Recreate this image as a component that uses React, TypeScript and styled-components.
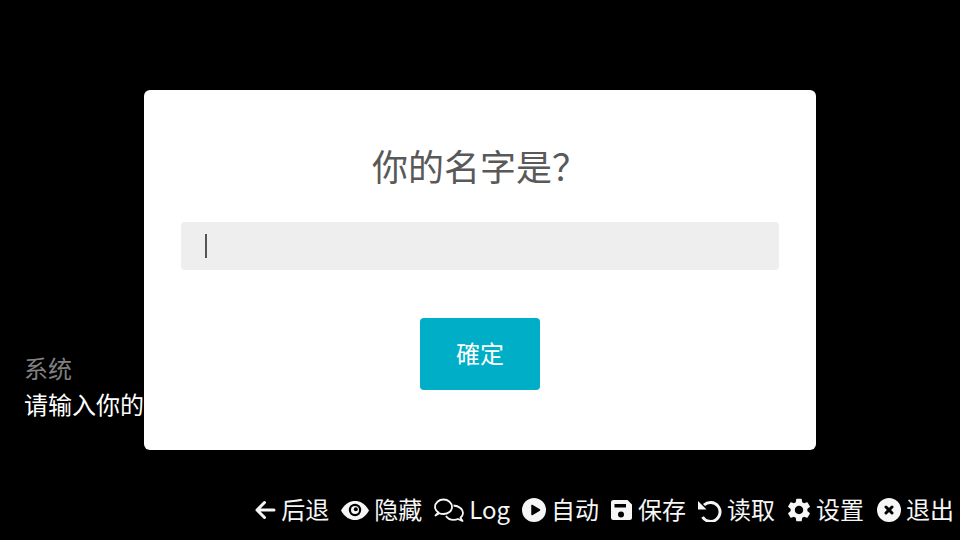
import * as React from "react";
import styled, { createGlobalStyle } from "styled-components";
import { MdSettings } from "react-icons/md";

const fontStack = `"Noto Sans CJK SC", "Noto Sans", sans-serif`;

const GlobalStyle = createGlobalStyle`
  html, body {
    margin: 0;
    padding: 0;
    background: #000;
    overflow: hidden;
  }
  * {
    box-sizing: border-box;
  }
`;

const Page = styled.div`
  width: 960px;
  height: 540px;
  display: flex;
  flex-direction: column;
  background: #000;
  font-family: ${fontStack};
  font-size: 24px;
  color: #fff;
`;

const Dialogue = styled.div`
  flex: 1;
  padding: 350px 24px 0;
  line-height: 36px;
`;

const Speaker = styled.div`
  color: #808080;
`;

const Toolbar = styled.div`
  height: 60px;
  display: flex;
  align-items: center;
  justify-content: flex-end;
  gap: 12px;
  padding-right: 6px;
`;

const ToolButton = styled.div`
  display: flex;
  align-items: center;
  gap: 5px;
  color: #f6f6f6;
`;

const ToolLabel = styled.span`
  line-height: 36px;
  padding-bottom: 2px;
`;

const ToolIcon = styled.svg<{ $w: number }>`
  display: block;
  flex: none;
  width: ${p => p.$w}px;
  height: 24px;
  fill: currentColor;
`;

const GearIcon = styled(MdSettings)`
  display: block;
  flex: none;
  width: 28px;
  height: 28px;
  margin: 0 -2px;
`;

const Overlay = styled.div`
  position: fixed;
  inset: 0;
  display: flex;
  align-items: center;
  justify-content: center;
`;

const Modal = styled.div`
  width: 672px;
  height: 360px;
  padding: 48px 37px 0;
  display: flex;
  flex-direction: column;
  align-items: center;
  background: #fff;
  border-radius: 6px;
`;

const Title = styled.h2`
  margin: 0 0 30px;
  font-size: 36px;
  font-weight: 400;
  line-height: 54px;
  color: #595959;
`;

const NameInput = styled.div`
  width: 100%;
  height: 48px;
  padding: 12px 24px;
  background: #eee;
  border-radius: 4px;
  margin-bottom: 48px;
`;

const Caret = styled.div`
  width: 2px;
  height: 24px;
  background: #555;
`;

const ConfirmButton = styled.button`
  width: 120px;
  height: 72px;
  padding: 0 0 4px;
  border: 0;
  border-radius: 4px;
  background: #00aec7;
  color: #fff;
  font-family: ${fontStack};
  font-size: 24px;
`;

const tools = [
  {
    label: "后退",
    icon: (
      <ToolIcon $w={22} viewBox="0 0 22 24">
        <path d="M20 12H3M10.500 4.500L3 12l7.500 7.500" fill="none" stroke="currentColor" strokeWidth="3" strokeLinecap="round" strokeLinejoin="round" />
      </ToolIcon>
    )
  },
  {
    label: "隐藏",
    icon: (
      <ToolIcon $w={28} viewBox="0 0 28 24">
        <path d="M0 12.500C4 5.500 9 3 14 3s10 2.500 14 9.500c-4 7-9 9.500-14 9.500S4 19.500 0 12.500z" />
        <circle cx="14" cy="12" r="6.200" fill="#000" />
        <circle cx="14" cy="12" r="4" />
        <circle cx="14.800" cy="11.300" r="2" fill="#000" />
      </ToolIcon>
    )
  },
  {
    label: "Log",
    icon: (
      <ToolIcon $w={30} viewBox="0 0 30 24">
        <path
          d="M4.500 14.500C2.300 13 1 11.200 1 9c0-4 3.800-7.500 8.500-7.500S18 5 18 9s-3.800 7-8.500 7c-1.500 0-3-.2-4.300-.8L1.500 17.500z"
          fill="none"
          stroke="currentColor"
          strokeWidth="1.800"
          strokeLinejoin="round"
        />
        <path
          d="M19.500 7.500C25 8 29 11 29 15c0 1.900-1 3.500-2.500 4.800l2 3.200-4.500-2c-1.400.6-3 .8-4.500.8-3.500 0-6-1.300-7.500-3.800"
          fill="none"
          stroke="currentColor"
          strokeWidth="1.800"
          strokeLinejoin="round"
        />
      </ToolIcon>
    )
  },
  {
    label: "自动",
    icon: (
      <ToolIcon $w={24} viewBox="0 0 24 24">
        <circle cx="12" cy="12" r="12" />
        <path d="M10 7.500v9l7.500-4.500z" fill="#000" stroke="#000" strokeWidth="1.500" strokeLinejoin="round" />
      </ToolIcon>
    )
  },
  {
    label: "保存",
    icon: (
      <ToolIcon $w={22} viewBox="0 0 22 24">
        <path d="M2.500 2h14L21 6.500v13a2.500 2.500 0 0 1-2.500 2.500h-16A2.500 2.500 0 0 1 0 19.500v-15A2.500 2.500 0 0 1 2.500 2z" />
        <rect x="3.500" y="6" width="11.500" height="3.500" fill="#000" />
        <circle cx="10" cy="16.500" r="3" fill="#000" />
      </ToolIcon>
    )
  },
  {
    label: "读取",
    icon: (
      <ToolIcon $w={24} viewBox="0 0 24 24">
        <path d="M6 7A9.500 9.500 0 1 1 4.500 19" fill="none" stroke="currentColor" strokeWidth="3" />
        <path d="M0 3v8.500h8.500z" />
      </ToolIcon>
    )
  },
  { label: "设置", icon: <GearIcon /> },
  {
    label: "退出",
    icon: (
      <ToolIcon $w={25} viewBox="0 0 25 24">
        <circle cx="13" cy="12" r="12" />
        <path d="M10 9l6 6M16 9l-6 6" stroke="#000" strokeWidth="3" strokeLinecap="round" />
      </ToolIcon>
    )
  }
];

export default function App() {
  return (
    <Page>
      <GlobalStyle />
      <Dialogue>
        <Speaker>系统</Speaker>
        <div>请输入你的名字</div>
      </Dialogue>
      <Toolbar>
        {tools.map(tool => (
          <ToolButton key={tool.label}>
            {tool.icon}
            <ToolLabel>{tool.label}</ToolLabel>
          </ToolButton>
        ))}
      </Toolbar>
      <Overlay>
        <Modal>
          <Title>你的名字是？</Title>
          <NameInput>
            <Caret />
          </NameInput>
          <ConfirmButton>確定</ConfirmButton>
        </Modal>
      </Overlay>
    </Page>
  );
}
